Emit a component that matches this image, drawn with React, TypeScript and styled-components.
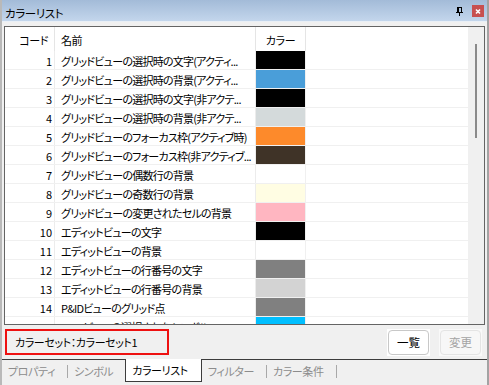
import * as React from 'react';
import styled, { createGlobalStyle } from 'styled-components';

interface IColorItem {
  name: string;
  color: string;
}

const items: IColorItem[] = [
  { name: 'グリッドビューの選択時の文字(アクティ...', color: '#000000' },
  { name: 'グリッドビューの選択時の背景(アクティ...', color: '#4a9ed9' },
  { name: 'グリッドビューの選択時の文字(非アクテ...', color: '#000000' },
  { name: 'グリッドビューの選択時の背景(非アクテ...', color: '#d4dadb' },
  { name: 'グリッドビューのフォーカス枠(アクティブ時)', color: '#fd8a2b' },
  { name: 'グリッドビューのフォーカス枠(非アクティブ...', color: '#3f3327' },
  { name: 'グリッドビューの偶数行の背景', color: '#ffffff' },
  { name: 'グリッドビューの奇数行の背景', color: '#fffde3' },
  { name: 'グリッドビューの変更されたセルの背景', color: '#ffb6c1' },
  { name: 'エディットビューの文字', color: '#000000' },
  { name: 'エディットビューの背景', color: '#ffffff' },
  { name: 'エディットビューの行番号の文字', color: '#808080' },
  { name: 'エディットビューの行番号の背景', color: '#d3d3d3' },
  { name: 'P&IDビューのグリッド点', color: '#808080' },
  { name: 'P&IDビューの選択されたシンボル', color: '#00bfff' },
];

const tabs = [
  { label: 'プロパティ', sep: true },
  { label: 'シンボル', sep: false },
  { label: 'カラーリスト', active: true },
  { label: 'フィルター', sep: true },
  { label: 'カラー条件', sep: true },
];

const GlobalStyle = createGlobalStyle`
  body {
    margin: 0;
    font-family: 'Noto Sans CJK JP', 'Noto Sans', sans-serif;
    font-size: 11px;
    letter-spacing: -0.4px;
    font-feature-settings: 'palt' 1;
    color: #000;
  }
`;

const PinIcon = () => (
  <svg width="8" height="9" viewBox="0 0 8 9" shapeRendering="crispEdges">
    <rect x="1" y="0" width="5" height="1" fill="#000" />
    <rect x="1" y="0" width="2" height="5" fill="#000" />
    <rect x="5" y="0" width="1" height="5" fill="#000" />
    <rect x="0" y="5" width="7" height="1" fill="#000" />
    <rect x="3" y="6" width="1" height="3" fill="#000" />
  </svg>
);

const CloseIcon = () => (
  <svg width="12" height="12" viewBox="0 0 12 12">
    <rect width="12" height="12" fill="#c75050" />
    <path d="M4 4.5 L8 8.5 M8 4.5 L4 8.5" stroke="#fff" strokeWidth="1.6" />
  </svg>
);

const App: React.FC = () => {
  return (
    <>
      <GlobalStyle />
      <Window>
        <TitleBar>
          <Title>カラーリスト</Title>
          <PinButton>
            <PinIcon />
          </PinButton>
          <CloseButton>
            <CloseIcon />
          </CloseButton>
        </TitleBar>
        <Body>
          <Grid>
            <Table>
              <HeaderRow>
                <HeaderCell align="right">コード</HeaderCell>
                <HeaderCell align="left">名前</HeaderCell>
                <HeaderCell align="center">カラー</HeaderCell>
                <FillCell />
              </HeaderRow>
              {items.map((item, i) => (
                <Row key={i}>
                  <NumCell>{i + 1}</NumCell>
                  <NameCell>{item.name}</NameCell>
                  <SwatchCell>
                    <Swatch swatch={item.color} />
                  </SwatchCell>
                  <FillCell />
                </Row>
              ))}
            </Table>
            <ScrollTrack>
              <ScrollThumb />
            </ScrollTrack>
          </Grid>
          <Footer>
            <StatusBox>カラーセット：カラーセット1</StatusBox>
            <Buttons>
              <Halo>
                <Button>一覧</Button>
              </Halo>
              <Halo dim>
                <Button disabled>変更</Button>
              </Halo>
            </Buttons>
          </Footer>
        </Body>
        <TabStrip>
          {tabs.map((t) => (
            <React.Fragment key={t.label}>
              {t.active ? <ActiveTab>{t.label}</ActiveTab> : <Tab>{t.label}</Tab>}
              {t.sep && <TabSep />}
            </React.Fragment>
          ))}
        </TabStrip>
      </Window>
    </>
  );
};

const Window = styled.div`
  width: 489px;
  height: 385px;
  box-sizing: border-box;
  border-left: 2px solid #b9b9b9;
  border-right: 2px solid #a3a3a3;
  background: #f0f0f0;
  display: flex;
  flex-direction: column;
  overflow: hidden;
`;

const TitleBar = styled.div`
  height: 21px;
  flex: none;
  display: flex;
  align-items: center;
  padding: 0 3px;
  background: linear-gradient(#a3bbd8, #c3d6ec);
  border-bottom: 1px solid #e9eff6;
`;

const Title = styled.div`
  flex: 1;
  padding-top: 4px;
  line-height: 16px;
  font-size: 11.5px;
`;

const PinButton = styled.div`
  display: flex;
  margin-right: 8px;
  margin-top: 1px;
`;

const CloseButton = styled.div`
  display: flex;
  margin-top: 1px;
`;

const Body = styled.div`
  flex: 1;
  display: flex;
  flex-direction: column;
  padding: 4px 2px 0 2px;
`;

const Grid = styled.div`
  height: 299px;
  box-sizing: border-box;
  border: 1px solid #646464;
  background: #fff;
  display: flex;
  overflow: hidden;
`;

const Table = styled.div`
  flex: 1;
  display: flex;
  flex-direction: column;
  overflow: hidden;
`;

const columns = '50px 201px 50px 1fr';

const HeaderRow = styled.div`
  display: grid;
  grid-template-columns: ${columns};
  height: 24px;
  flex: none;
`;

const HeaderCell = styled.div<{ align: 'left' | 'right' | 'center' }>`
  border-right: 1px solid #e5e5e5;
  text-align: ${(p) => p.align};
  padding: 4px ${(p) => (p.align === 'right' ? '6px' : '0')} 0 ${(p) => (p.align === 'left' ? '6px' : '0')};
  line-height: 18px;
`;

const FillCell = styled.div``;

const Row = styled.div`
  display: grid;
  grid-template-columns: ${columns};
  height: 19px;
  flex: none;
  box-sizing: border-box;
  border-bottom: 1px solid #f0f0f0;
`;

const NumCell = styled.div`
  border-right: 1px solid #ececec;
  text-align: right;
  padding-right: 2px;
  line-height: 20px;
  overflow: hidden;
  letter-spacing: 0;
`;

const NameCell = styled.div`
  border-right: 1px solid #ececec;
  padding-left: 6px;
  line-height: 20px;
  letter-spacing: -0.75px;
  white-space: nowrap;
  overflow: hidden;
`;

const SwatchCell = styled.div`
  border-right: 1px solid #f0f0f0;
  display: flex;
`;

const Swatch = styled.div<{ swatch: string }>`
  flex: 1;
  background: ${(p) => p.swatch};
`;

const ScrollTrack = styled.div`
  width: 16px;
  flex: none;
  background: #f0f0f0;
  padding-top: 17px;
  box-sizing: border-box;
`;

const ScrollThumb = styled.div`
  width: 2px;
  height: 94px;
  margin-left: 7px;
  background: #8a8a8a;
`;

const Footer = styled.div`
  margin-top: 4px;
  height: 26px;
  display: flex;
  align-items: center;
  justify-content: space-between;
`;

const StatusBox = styled.div`
  margin-left: 1px;
  width: 164px;
  height: 26px;
  box-sizing: border-box;
  border: 2px solid #ee1111;
  padding-left: 8px;
  line-height: 22px;
  white-space: nowrap;
`;

const Buttons = styled.div`
  display: flex;
  gap: 9px;
  margin-right: 3px;
`;

const Halo = styled.div<{ dim?: boolean }>`
  padding: 1px;
  background: ${(p) => (p.dim ? '#f9f9f9' : '#ffffff')};
`;

const Button = styled.button`
  width: 41px;
  height: 25px;
  box-sizing: border-box;
  border: 1px solid #c8c8c8;
  border-radius: 4px;
  background: #fff;
  font-family: inherit;
  font-size: 11.5px;
  letter-spacing: 0;
  color: #000;
  padding: 0;
  line-height: 22px;

  &:disabled {
    color: #a4a4a4;
    border-color: #e4e4e4;
    background: #f7f7f7;
  }
`;

const TabStrip = styled.div`
  margin-top: 4px;
  height: 26px;
  box-sizing: border-box;
  border-top: 1px solid #3c3c3c;
  display: flex;
  align-items: flex-start;
`;

const Tab = styled.div`
  padding: 0 12px 0 6px;
  height: 22px;
  line-height: 22px;
  color: #8c8c8c;
  white-space: nowrap;
`;

const ActiveTab = styled.div`
  margin-top: -1px;
  height: 23px;
  box-sizing: border-box;
  border: 1px solid #3c3c3c;
  border-top: none;
  background: #fff;
  padding: 1px 13px 0 6px;
  line-height: 21px;
  white-space: nowrap;
`;

const TabSep = styled.div`
  width: 1px;
  height: 13px;
  margin-top: 5px;
  background: #a8a8a8;
`;

export default App;
